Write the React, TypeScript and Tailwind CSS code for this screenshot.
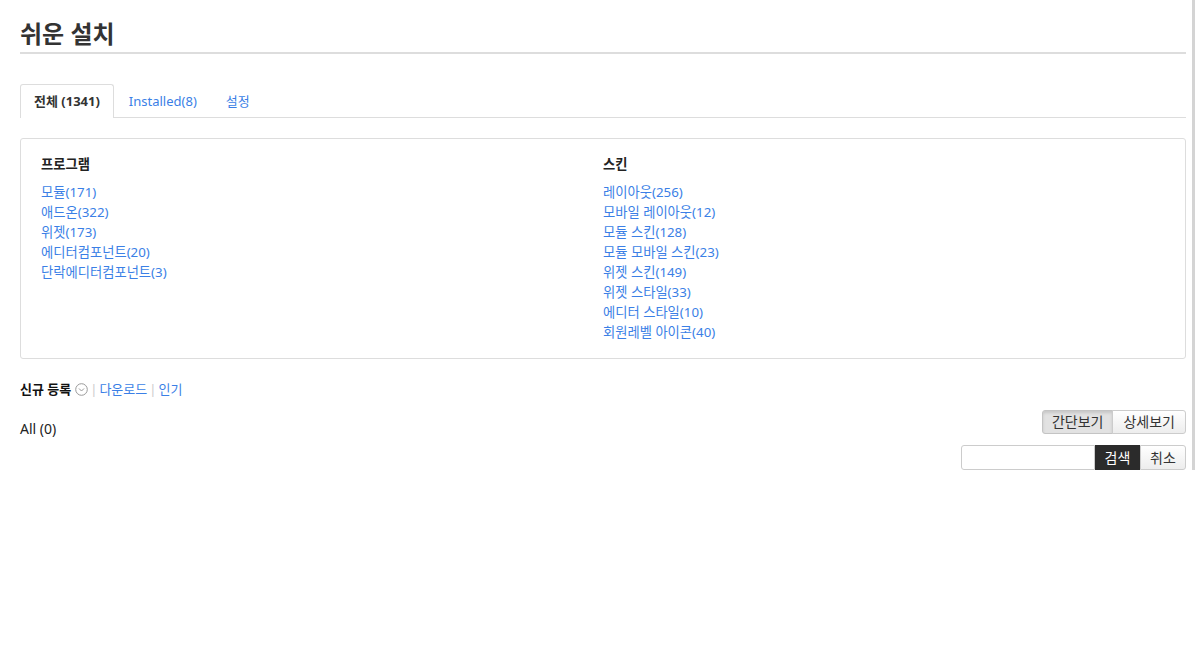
import React from "react";

const programs = ["모듈(171)", "애드온(322)", "위젯(173)", "에디터컴포넌트(20)", "단락에디터컴포넌트(3)"];
const skins = [
  "레이아웃(256)",
  "모바일 레이아웃(12)",
  "모듈 스킨(128)",
  "모듈 모바일 스킨(23)",
  "위젯 스킨(149)",
  "위젯 스타일(33)",
  "에디터 스타일(10)",
  "회원레벨 아이콘(40)",
];

export default function App() {
  return (
    <div
      className="w-[1195px] bg-white text-[#333]"
      style={{ fontFamily: '"Noto Sans", "Noto Sans CJK KR", sans-serif' }}
    >
      <div className="border-r-[3px] border-[#d4d4d4] pl-[20px] pr-[6px]">
        <h1 className="pt-[18px] pb-[2px] text-[24px] font-bold leading-[32px] text-[#333] border-b-2 border-[#ddd]">
          쉬운 설치
        </h1>

        <div className="mt-[30px] flex border-b border-[#ddd] text-[13px] leading-[18px]">
          <div className="-mb-px rounded-t-[3px] border border-b-0 border-[#ddd] bg-white px-[13px] pt-[7px] pb-[7px] font-bold text-[#333]">
            전체 (1341)
          </div>
          <a className="px-[15px] pt-[8px] pb-[7px] text-[#3b7fe6]">Installed(8)</a>
          <a className="px-[14px] pt-[8px] pb-[7px] text-[#3b7fe6]">설정</a>
        </div>

        <div className="mt-[20px] grid grid-cols-2 rounded-[3px] border border-[#ddd] px-[20px] pt-[15px] pb-[16px] text-[13.3px]">
          <div>
            <h2 className="font-bold leading-[20px] text-[#222]">프로그램</h2>
            <ul className="mt-[8px]">
              {programs.map((p) => (
                <li key={p} className="leading-[20px] text-[#3b7fe6]">
                  {p}
                </li>
              ))}
            </ul>
          </div>
          <div>
            <h2 className="font-bold leading-[20px] text-[#222]">스킨</h2>
            <ul className="mt-[8px]">
              {skins.map((p) => (
                <li key={p} className="leading-[20px] text-[#3b7fe6]">
                  {p}
                </li>
              ))}
            </ul>
          </div>
        </div>

        <div className="mt-[20px] flex items-center text-[13px] leading-[20px]">
          <span className="font-bold text-[#111]">신규 등록</span>
          <svg className="ml-[4px]" width="13" height="13" viewBox="0 0 13 13">
            <circle cx="6.5" cy="6.5" r="5.8" fill="none" stroke="#999" strokeWidth="1" />
            <path d="M4 5.5 L6.5 8 L9 5.5" fill="none" stroke="#999" strokeWidth="1" />
          </svg>
          <span className="mx-[2px] text-[#ccc]">|</span>
          <a className="text-[#3b7fe6]">다운로드</a>
          <span className="mx-[2px] text-[#ccc]">|</span>
          <a className="text-[#3b7fe6]">인기</a>
        </div>

        <div className="mt-[11px] flex items-start justify-between">
          <div className="pt-[9px] text-[14px] leading-[20px] text-[#222]">All (0)</div>
          <div className="flex flex-col items-end">
            <div className="flex text-[14px] leading-[22px]">
              <button className="rounded-l-[3px] border border-[#c4c4c4] bg-[#e2e2e2] px-[9px] text-[#333] shadow-[inset_0_2px_3px_rgba(0,0,0,0.12)]">
                간단보기
              </button>
              <button className="-ml-px rounded-r-[3px] border border-[#ccc] bg-gradient-to-b from-[#fff] to-[#ededed] px-[10px] text-[#333]">
                상세보기
              </button>
            </div>
            <div className="mt-[11px] flex text-[14px] leading-[23px]">
              <input className="h-[25px] w-[134px] rounded-l-[3px] border border-[#ccc] bg-white outline-none" />
              <button className="flex h-[25px] w-[45px] items-center justify-center bg-[#2b2b2b] text-white">검색</button>
              <button className="flex h-[25px] w-[46px] items-center justify-center rounded-r-[3px] border border-[#ccc] bg-gradient-to-b from-[#fff] to-[#ededed] text-[#333]">
                취소
              </button>
            </div>
          </div>
        </div>
      </div>
    </div>
  );
}
